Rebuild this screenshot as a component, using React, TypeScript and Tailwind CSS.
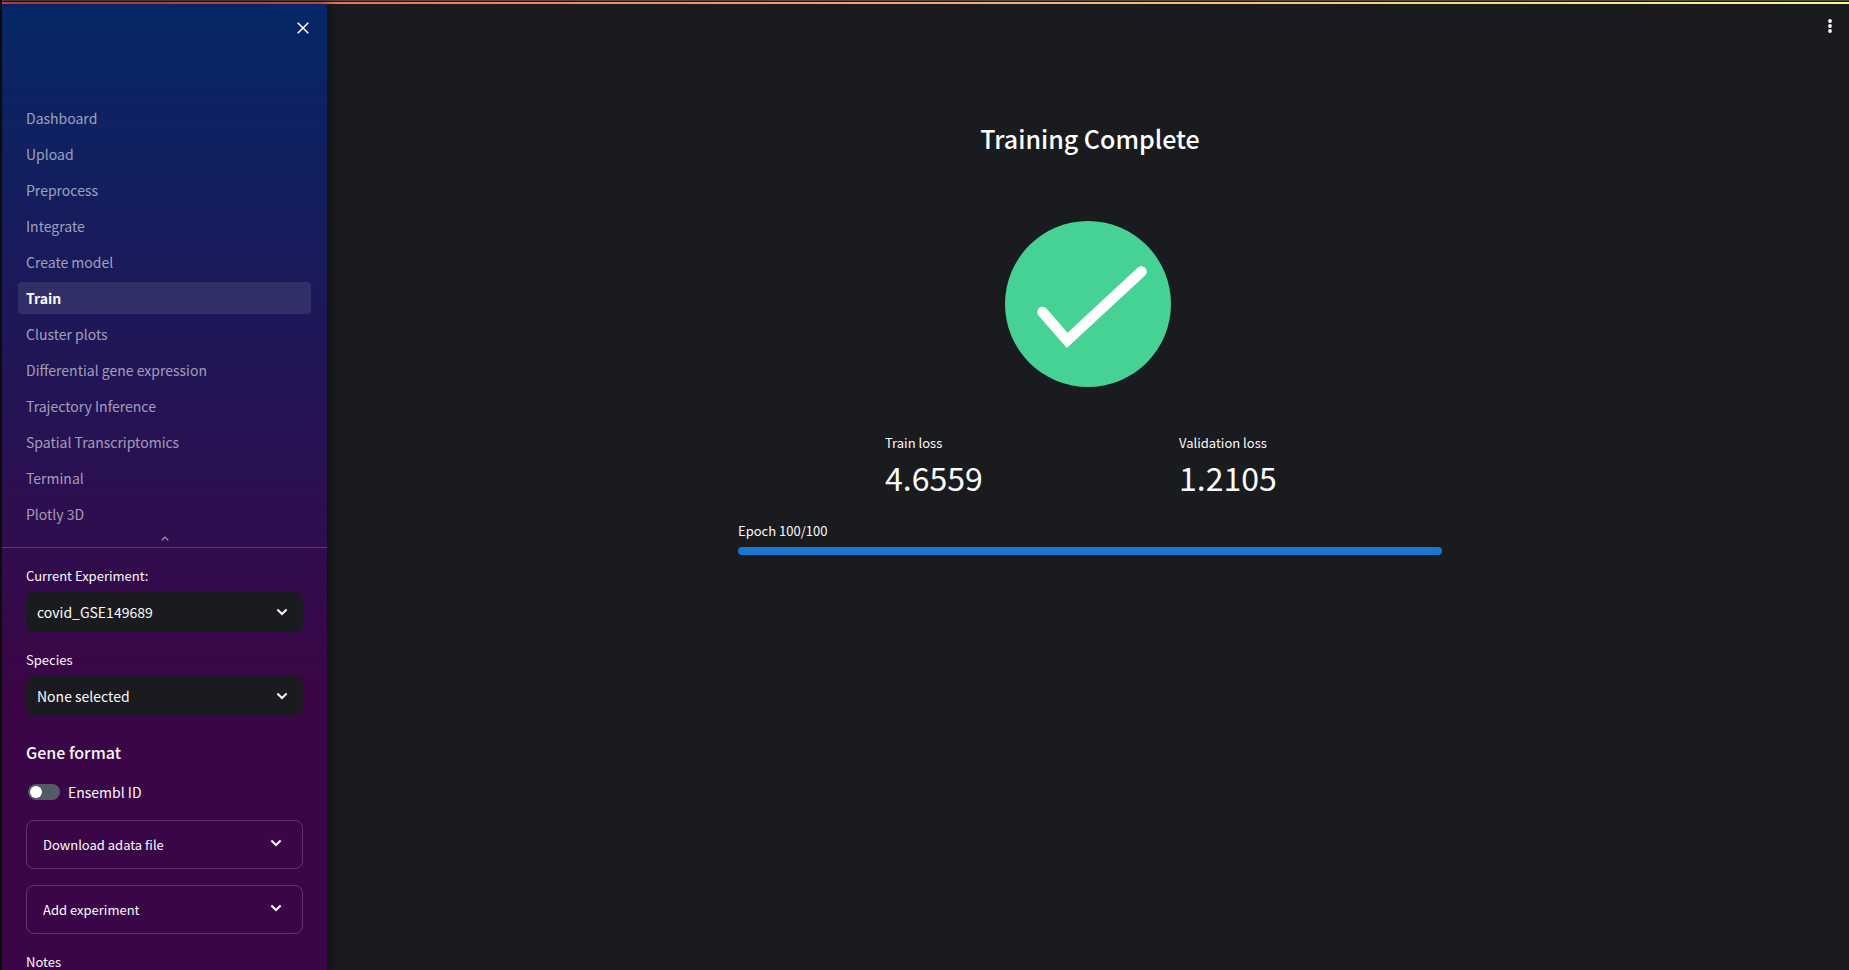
import React, { useState } from 'react';

const pages = [
  'Dashboard',
  'Upload',
  'Preprocess',
  'Integrate',
  'Create model',
  'Train',
  'Cluster plots',
  'Differential gene expression',
  'Trajectory Inference',
  'Spatial Transcriptomics',
  'Terminal',
  'Plotly 3D',
];

function Chevron({ className = '' }: { className?: string }) {
  return (
    <svg viewBox="0 0 12 8" className={className} fill="none" stroke="currentColor" strokeWidth="2" aria-hidden="true">
      <path d="M1.4 1.5 6 6l4.6-4.5" />
    </svg>
  );
}

function SelectField({ id, label, options }: { id: string; label: string; options: string[] }) {
  return (
    <div className="flex flex-col gap-1">
      <label htmlFor={id} className="text-[13px] leading-6">
        {label}
      </label>
      <div className="grid items-center">
        <select
          id={id}
          className="col-start-1 row-start-1 h-10 w-full appearance-none rounded-lg bg-[#1a1b1e] px-[11px] text-sm text-[#fafafa] outline-none"
        >
          {options.map((option) => (
            <option key={option}>{option}</option>
          ))}
        </select>
        <Chevron className="pointer-events-none col-start-1 row-start-1 mr-[15px] h-2 w-3 justify-self-end" />
      </div>
    </div>
  );
}

function Expander({ title }: { title: string }) {
  return (
    <button
      type="button"
      aria-expanded="false"
      className="flex h-[49px] w-full items-center justify-between rounded-lg border border-[#fafafa]/20 pl-4 pr-5 text-left text-[13px]"
    >
      {title}
      <Chevron className="mb-1 h-2 w-3" />
    </button>
  );
}

function Metric({ label, value }: { label: string; value: string }) {
  return (
    <div className="flex flex-col">
      <span className="text-[13px] leading-6">{label}</span>
      <span className="text-[32px] leading-11">{value}</span>
    </div>
  );
}

function Sidebar() {
  const [ensembl, setEnsembl] = useState(false);
  return (
    <aside className="relative flex w-[325px] shrink-0 flex-col overflow-hidden bg-[linear-gradient(180deg,rgb(5,39,103)_0%,#3a0647_70%)] shadow-[0_0_12px_1px_rgba(0,0,0,0.6)]">
      <div className="flex h-[98px] shrink-0 items-start justify-end px-4 pt-4">
        <button type="button" aria-label="Close sidebar" className="flex size-4 items-center justify-center">
          <svg viewBox="0 0 12 12" className="size-3" fill="none" stroke="currentColor" strokeWidth="1.6" aria-hidden="true">
            <path d="M.7.7l10.6 10.6M11.3.7.7 11.3" />
          </svg>
        </button>
      </div>
      <nav aria-label="Pages" className="flex shrink-0 flex-col gap-1 px-4 text-sm leading-8">
        {pages.map((page) =>
          page === 'Train' ? (
            <a key={page} href="#train" aria-current="page" className="rounded bg-[#acb1c3]/15 px-2 text-sm leading-8 font-bold">
              {page}
            </a>
          ) : (
            <a key={page} href="#page" className="rounded px-2 text-sm leading-8 text-[#fafafa]/60">
              {page}
            </a>
          ),
        )}
      </nav>
      <button
        type="button"
        aria-label="Collapse page list"
        className="flex h-[18px] shrink-0 items-center justify-center border-b border-[#fafafa]/20 text-[#fafafa]/60"
      >
        <svg viewBox="0 0 8 5" className="h-[5px] w-2" fill="none" stroke="currentColor" strokeWidth="1.3" aria-hidden="true">
          <path d="M.7 4.4 4 1.1l3.3 3.3" />
        </svg>
      </button>
      <div className="flex shrink-0 flex-col gap-4 px-6 pt-4">
        <SelectField id="experiment" label="Current Experiment:" options={['covid_GSE149689']} />
        <SelectField id="species" label="Species" options={['None selected']} />
        <div className="flex flex-col gap-3 pt-1">
          <h2 className="text-base font-medium leading-8">Gene format</h2>
          <label className="flex h-6 cursor-pointer items-center gap-2 pl-[2px] text-sm">
            <input
              type="checkbox"
              checked={ensembl}
              onChange={(event) => setEnsembl(event.target.checked)}
              className="peer sr-only"
            />
            <span className="flex h-4 w-8 items-center rounded-full bg-[#555867] px-[2px] peer-checked:justify-end">
              <span className="size-3 rounded-full bg-white" />
            </span>
            Ensembl ID
          </label>
        </div>
        <Expander title="Download adata file" />
        <Expander title="Add experiment" />
        <label htmlFor="notes" className="text-[13px] leading-6">
          Notes
        </label>
        <textarea id="notes" className="h-24 resize-none rounded-lg bg-[#1a1b1e] p-3 text-sm" />
      </div>
    </aside>
  );
}

export default function App() {
  return (
    <div className="flex h-screen flex-col overflow-hidden border-l-2 border-[#0b0b0c] bg-[#1a1b1e] font-['Noto_Sans_CJK_SC','Source_Sans_Pro',sans-serif] text-[#fafafa]">
      <div className="h-px shrink-0 bg-[#4a4a4a]" />
      <div className="h-px shrink-0 bg-[#1a1b1e]" />
      <div className="h-[2px] shrink-0 bg-[linear-gradient(90deg,#ff4b4b,#fffd80)]" />
      <div className="flex min-h-0 flex-1">
        <Sidebar />
        <main className="flex min-w-0 flex-1 flex-col">
          <header className="flex h-11 shrink-0 items-center justify-end px-4">
            <button type="button" aria-label="Main menu" className="flex h-5 w-[6px] items-center justify-center">
              <svg viewBox="0 0 4 14" className="h-[14px] w-1" fill="currentColor" aria-hidden="true">
                <circle cx="2" cy="2" r="1.9" />
                <circle cx="2" cy="7" r="1.9" />
                <circle cx="2" cy="12" r="1.9" />
              </svg>
            </button>
          </header>
          <div className="flex flex-col items-center pl-1 pt-[70px]">
            <h1 className="text-[25px] font-medium leading-10 text-white">Training Complete</h1>
            <div className="pr-1 pt-[63px]">
              <svg viewBox="0 0 166 166" className="size-[166px]" role="img" aria-label="Success">
                <circle cx="83" cy="83" r="83" fill="#46d195" />
                <path d="M37.5 91 62.2 119.5 136.5 50.5" fill="none" stroke="#fff" strokeWidth="10.6" strokeLinecap="round" />
              </svg>
            </div>
            <div className="flex w-full max-w-[704px] flex-col pt-11">
              <div className="grid grid-cols-[147px_294px_1fr]">
                <span />
                <Metric label="Train loss" value="4.6559" />
                <Metric label="Validation loss" value="1.2105" />
              </div>
              <p className="pt-5 text-[13px] leading-6">Epoch 100/100</p>
              <div
                role="progressbar"
                aria-label="Epoch"
                aria-valuenow={100}
                aria-valuemin={0}
                aria-valuemax={100}
                className="mt-1 h-2 rounded bg-[#1976d2]"
              />
            </div>
          </div>
        </main>
      </div>
    </div>
  );
}
